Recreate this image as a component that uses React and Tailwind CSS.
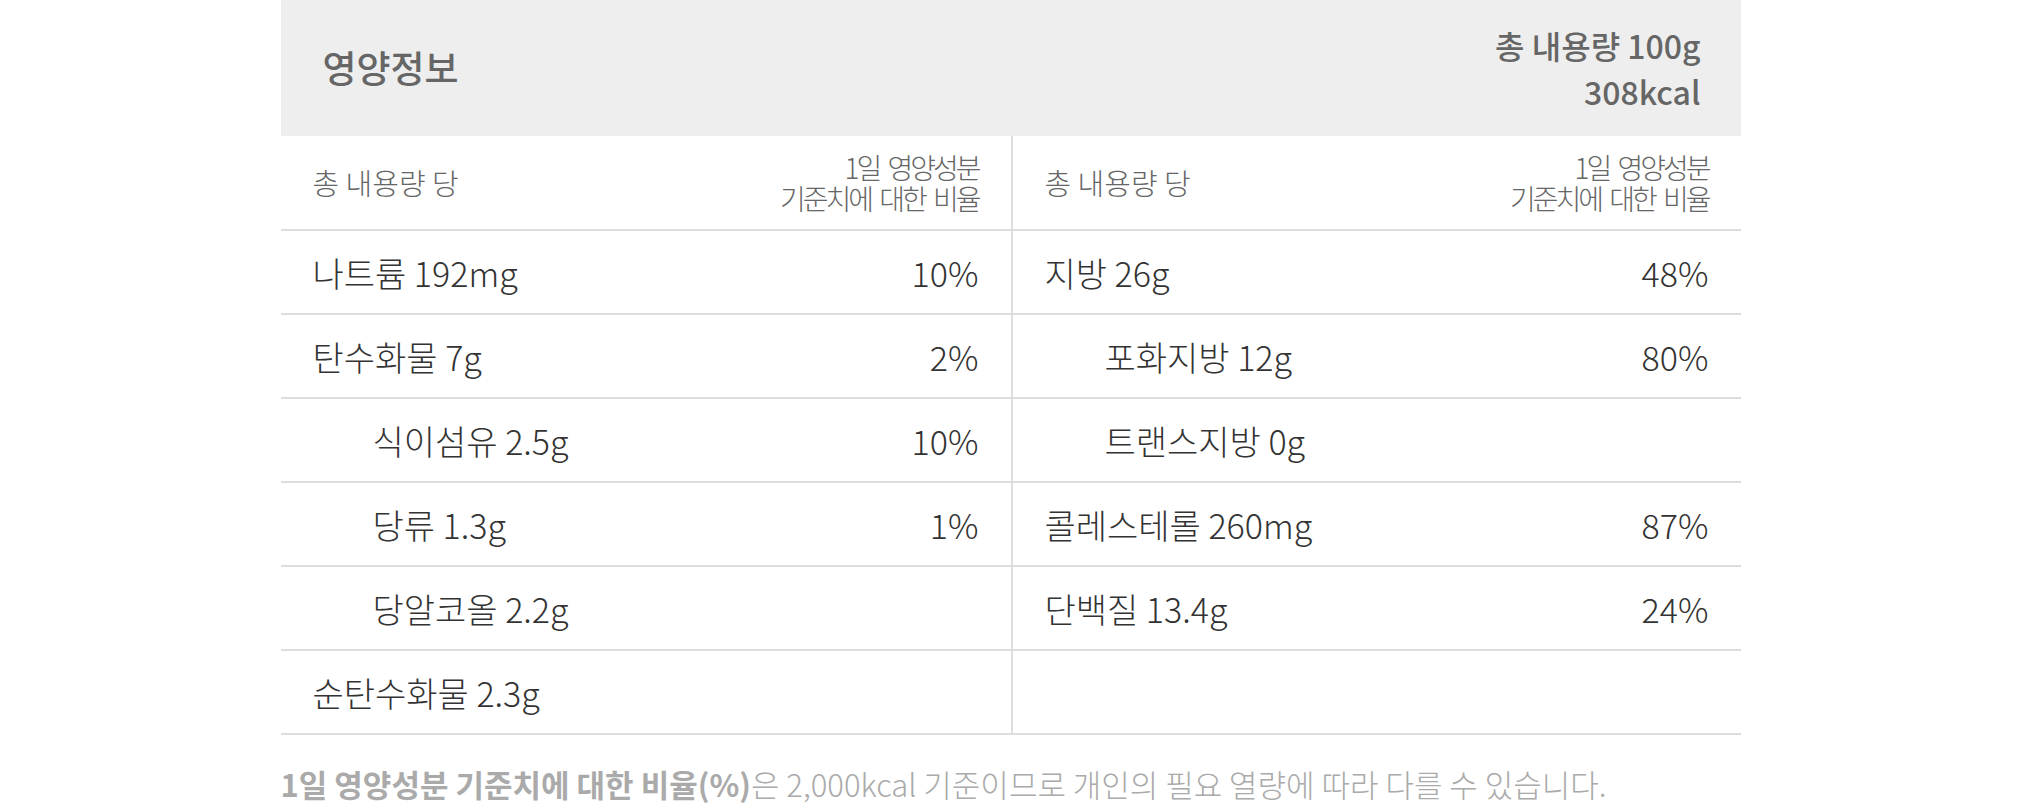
import React from 'react';

// 왼쪽/오른쪽 열에 들어갈 행 데이터 (indent: 하위 항목)
const LEFT = [
  { name: '나트륨 192mg', pct: '10%' },
  { name: '탄수화물 7g', pct: '2%' },
  { name: '식이섬유 2.5g', pct: '10%', indent: true },
  { name: '당류 1.3g', pct: '1%', indent: true },
  { name: '당알코올 2.2g', pct: '', indent: true },
  { name: '순탄수화물 2.3g', pct: '' },
];

const RIGHT = [
  { name: '지방 26g', pct: '48%' },
  { name: '포화지방 12g', pct: '80%', indent: true },
  { name: '트랜스지방 0g', pct: '', indent: true },
  { name: '콜레스테롤 260mg', pct: '87%' },
  { name: '단백질 13.4g', pct: '24%' },
  null,
];

function Cell({ row, right }) {
  return (
    <div
      className={
        'h-[84px] border-b-2 border-[#dddddd] flex items-center justify-between pr-[32px] text-[34px] font-light text-[#333333] ' +
        (right ? 'border-l-2 ' : '') +
        (row && row.indent ? 'pl-[92px]' : 'pl-[32px]')
      }
    >
      <span>{row ? row.name : ''}</span>
      <span>{row ? row.pct : ''}</span>
    </div>
  );
}

function ColHead({ right }) {
  return (
    <div
      className={
        'h-[95px] border-b-2 border-[#dddddd] flex items-center justify-between pl-[32px] pr-[32px] text-[#666666] font-light ' +
        (right ? 'border-l-2' : '')
      }
    >
      <span className="text-[29px]">총 내용량 당</span>
      <div className="text-right text-[28px] leading-[31px] tracking-[-3px] [word-spacing:5px]">
        <div>1일 영양성분</div>
        <div>기준치에 대한 비율</div>
      </div>
    </div>
  );
}

export default function App() {
  const rows = LEFT.map((l, i) => [l, RIGHT[i]]);

  return (
    <div className="min-h-screen bg-white" style={{ fontFamily: '"Noto Sans CJK KR", "Noto Sans", sans-serif' }}>
      <div className="w-[1460px] mx-auto">
        {/* 헤더 */}
        <div className="h-[136px] bg-[#eeeeee] flex items-center justify-between pl-[42px] pr-[40px] text-[#666666]">
          <h2 className="text-[37px] font-medium">영양정보</h2>
          <div className="text-right text-[32px] font-medium leading-[46px]">
            <div>총 내용량 100g</div>
            <div>308kcal</div>
          </div>
        </div>

        {/* 표 */}
        <div className="grid grid-cols-2">
          <ColHead />
          <ColHead right />
          {rows.map(([l, r], i) => (
            <React.Fragment key={i}>
              <Cell row={l} />
              <Cell row={r} right />
            </React.Fragment>
          ))}
        </div>

        {/* 안내문 */}
        <p className="mt-[28px] text-[31px] leading-[42px] text-[#aaaaaa] font-light">
          <span className="font-bold">1일 영양성분 기준치에 대한 비율(%)</span>은 2,000kcal 기준이므로 개인의 필요 열량에 따라 다를 수 있습니다.
        </p>
      </div>
    </div>
  );
}
